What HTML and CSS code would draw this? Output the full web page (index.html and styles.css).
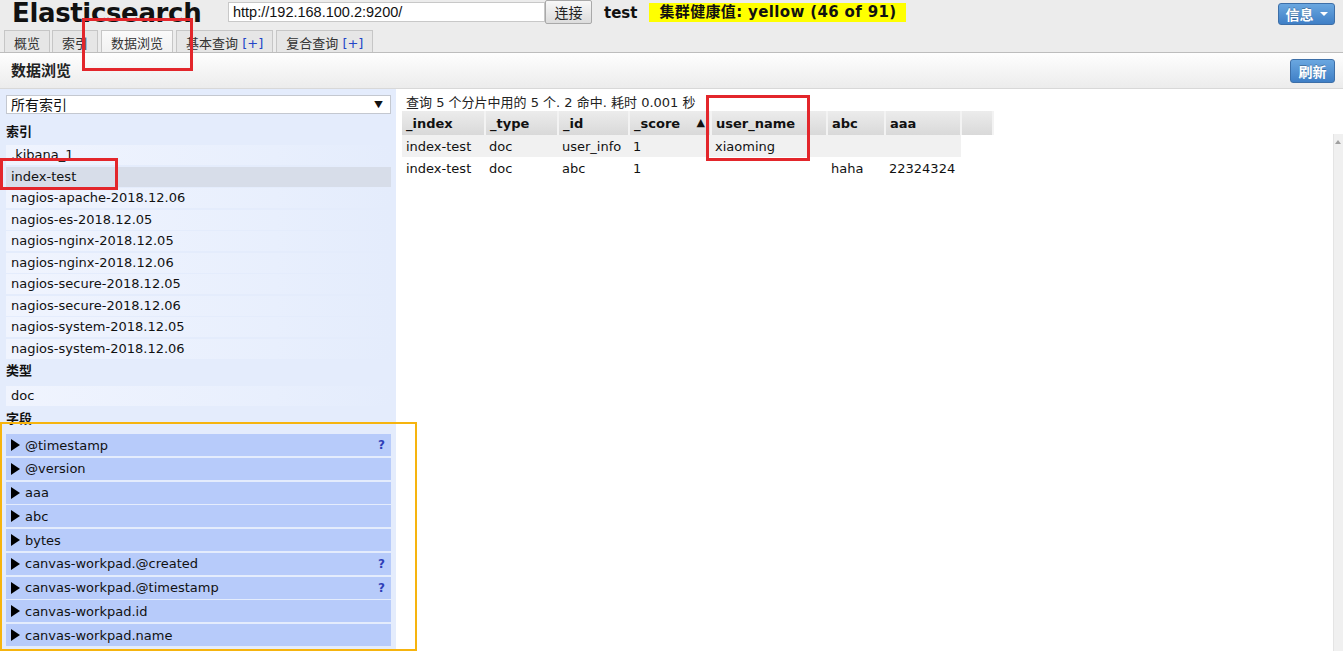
FILE: index.html
```html
<!DOCTYPE html>
<html lang="zh">
<head>
<meta charset="utf-8">
<title>Elasticsearch</title>
<link rel="stylesheet" href="styles.css">
</head>
<body>
<div class="header">
  <div class="top">
    <h1 class="logo">Elasticsearch</h1>
    <input class="url" type="text" value="http://192.168.100.2:9200/">
    <button class="connect">连接</button>
    <span class="cluster">test</span>
    <span class="health">集群健康值: yellow (46 of 91)</span>
    <button class="bluebtn info">信息 <span class="caret"></span></button>
  </div>
  <div class="tabs">
    <div class="tab">概览</div>
    <div class="tab">索引</div>
    <div class="tab active">数据浏览</div>
    <div class="tab">基本查询 <span class="plus">[+]</span></div>
    <div class="tab">复合查询 <span class="plus">[+]</span></div>
  </div>
</div>
<div class="toolbar">
  <h2 class="toolbar-title">数据浏览</h2>
  <button class="bluebtn refresh">刷新</button>
</div>
<div class="content">
  <div class="sidebar">
    <div class="select">所有索引<span class="sel-arrow">▼</span></div>
    <div class="sec-title first">索引</div>
    <div class="list first">
      <div class="item">.kibana_1</div>
      <div class="item selected">index-test</div>
      <div class="item">nagios-apache-2018.12.06</div>
      <div class="item">nagios-es-2018.12.05</div>
      <div class="item">nagios-nginx-2018.12.05</div>
      <div class="item">nagios-nginx-2018.12.06</div>
      <div class="item">nagios-secure-2018.12.05</div>
      <div class="item">nagios-secure-2018.12.06</div>
      <div class="item">nagios-system-2018.12.05</div>
      <div class="item">nagios-system-2018.12.06</div>
    </div>
    <div class="sec-title">类型</div>
    <div class="list">
      <div class="item">doc</div>
    </div>
    <div class="sec-title">字段</div>
    <div class="list">
      <div class="field"><span class="tri"></span><span class="fname">@timestamp</span><span class="q">?</span></div>
      <div class="field"><span class="tri"></span><span class="fname">@version</span></div>
      <div class="field"><span class="tri"></span><span class="fname">aaa</span></div>
      <div class="field"><span class="tri"></span><span class="fname">abc</span></div>
      <div class="field"><span class="tri"></span><span class="fname">bytes</span></div>
      <div class="field"><span class="tri"></span><span class="fname">canvas-workpad.@created</span><span class="q">?</span></div>
      <div class="field"><span class="tri"></span><span class="fname">canvas-workpad.@timestamp</span><span class="q">?</span></div>
      <div class="field"><span class="tri"></span><span class="fname">canvas-workpad.id</span></div>
      <div class="field"><span class="tri"></span><span class="fname">canvas-workpad.name</span></div>
    </div>
  </div>
  <div class="main">
    <div class="results">
      <div class="summary">查询 5 个分片中用的 5 个. 2 命中. 耗时 0.001 秒</div>
      <table class="grid">
        <colgroup>
          <col class="c1"><col class="c2"><col class="c3"><col class="c4"><col class="c5"><col class="c6"><col class="c7"><col class="c8">
        </colgroup>
        <thead>
          <tr>
            <th>_index</th><th>_type</th><th>_id</th><th>_score<span class="sort">▲</span></th><th>user_name</th><th>abc</th><th>aaa</th><th></th>
          </tr>
        </thead>
        <tbody>
          <tr class="odd"><td>index-test</td><td>doc</td><td>user_info</td><td>1</td><td>xiaoming</td><td></td><td></td></tr>
          <tr><td>index-test</td><td>doc</td><td>abc</td><td>1</td><td></td><td>haha</td><td>22324324</td></tr>
        </tbody>
      </table>
    </div>
    <div class="scrollbar"><span class="sb-up"></span></div>
  </div>
</div>
<div class="mark mark-tab"></div>
<div class="mark mark-index"></div>
<div class="mark mark-col"></div>
<div class="mark-fields"></div>
</body>
</html>
```

FILE: styles.css
```css
html, body {
  margin: 0;
  padding: 0;
}
body {
  font-family: "DejaVu Sans", "Noto Sans CJK SC", sans-serif;
  font-size: 13px;
  color: #111;
  background: #fff;
  width: 1343px;
  height: 652px;
  overflow: hidden;
}
.header {
  background: #ececec;
  border-bottom: 1px solid #bdbdbd;
}
.top {
  display: flex;
  align-items: flex-start;
  height: 30px;
}
.logo {
  margin: 0 0 0 12px;
  width: 216px;
  font-size: 26px;
  line-height: 26px;
  letter-spacing: -0.35px;
  font-weight: bold;
  color: #111;
}
.url {
  box-sizing: border-box;
  width: 317px;
  height: 20px;
  margin: 2px 0 0 0;
  border: 1px solid #c8c8c8;
  padding: 0 4px;
  font-family: "Liberation Sans", sans-serif;
  font-size: 14.5px;
  color: #111;
  background: #fff;
}
.connect {
  box-sizing: border-box;
  width: 47px;
  height: 24px;
  margin: 0;
  padding: 0;
  border: 1px solid #a9a9a9;
  border-radius: 2px;
  background: linear-gradient(#f8f8f8, #dcdcdc);
  font-family: "Noto Sans CJK SC", sans-serif;
  font-size: 14px;
  color: #222;
}
.cluster {
  margin: 3px 0 0 12px;
  font-size: 15px;
  line-height: 20px;
  font-weight: bold;
}
.health {
  margin: 3px 0 0 12px;
  padding: 0 10px;
  height: 19px;
  line-height: 19px;
  background: #ffff00;
  font-size: 15px;
  font-weight: bold;
  letter-spacing: 0.35px;
}
.bluebtn {
  box-sizing: border-box;
  border: 1px solid #3d6fa8;
  border-radius: 3px;
  background: linear-gradient(#6aa7e0, #3f7fc6);
  color: #fff;
  font-family: "Noto Sans CJK SC", sans-serif;
  font-weight: bold;
  font-size: 14px;
  padding: 0;
  text-shadow: 0 -1px 0 rgba(0,0,0,0.25);
}
.info {
  margin: 3px 8px 0 auto;
  width: 57px;
  height: 22px;
  display: flex;
  align-items: center;
  justify-content: center;
  gap: 6px;
}
.caret {
  width: 0;
  height: 0;
  border-left: 4px solid transparent;
  border-right: 4px solid transparent;
  border-top: 4px solid #fff;
}
.tabs {
  display: flex;
  align-items: flex-end;
  height: 22px;
  padding-left: 4px;
  gap: 2px;
}
.tab {
  box-sizing: border-box;
  height: 22px;
  line-height: 16px;
  padding: 5px 9px 0 9px;
  border: 1px solid #c6c6c6;
  border-bottom: none;
  background: #e6e6e6;
  color: #333;
  margin-right: 1px;
}
.tab:first-child { margin-right: 0; }
.tab.active {
  background: linear-gradient(#fafafa, #f1f1f1);
}
.plus {
  color: #2445c8;
}
.toolbar {
  box-sizing: border-box;
  height: 36px;
  display: flex;
  align-items: center;
  justify-content: space-between;
  padding: 0 8px 0 11px;
  background: linear-gradient(#fefefe, #ececec);
  border-bottom: 1px solid #d8d8d8;
}
.toolbar-title {
  margin: 0 0 3px 0;
  font-size: 15px;
  font-weight: bold;
  color: #222;
}
.refresh {
  width: 45px;
  height: 24px;
}
.content {
  display: flex;
  height: 562px;
}
.sidebar {
  width: 396px;
  box-sizing: border-box;
  padding: 6px 6px 0 6px;
  background: #e4ecfc;
}
.select {
  box-sizing: border-box;
  height: 19px;
  width: 385px;
  background: #fff;
  border: 1px solid #c4c8d0;
  padding: 0 4px;
  line-height: 17px;
  font-family: "Noto Sans CJK SC", sans-serif;
  font-size: 14px;
  position: relative;
  display: flex;
  justify-content: space-between;
}
.sel-arrow {
  font-size: 9px;
  color: #111;
  margin-right: 3px;
}
.sec-title {
  height: 22px;
  line-height: 22px;
  font-weight: bold;
  color: #111;
}
.sec-title.first {
  margin-top: 7px;
}
.list {
  margin-top: 4px;
}
.list.first {
  margin-top: 2px;
}
.item {
  box-sizing: border-box;
  height: 20px;
  line-height: 20px;
  padding-left: 5px;
  margin-bottom: 1.56px;
  width: 385px;
  background: linear-gradient(to right, #f0f4fe, #e8effd 70%, #e4ecfc);
}
.item.selected {
  background: #d7dde9;
}
.field {
  box-sizing: border-box;
  display: flex;
  align-items: center;
  height: 22px;
  width: 385px;
  margin-bottom: 1.75px;
  padding: 0 6px 0 5px;
  background: #b7cbfa;
}
.tri {
  width: 0;
  height: 0;
  border-top: 6px solid transparent;
  border-bottom: 6px solid transparent;
  border-left: 9px solid #000;
  margin-right: 5px;
}
.fname {
  flex: 1;
}
.q {
  color: #2f3fb8;
  font-weight: bold;
  font-size: 12px;
}
.main {
  flex: 1;
  display: flex;
}
.results {
  flex: 1;
  padding-left: 6px;
}
.summary {
  margin: 6px 0 0 4px;
  line-height: 16px;
  color: #222;
}
.grid {
  margin-top: 0;
  border-collapse: collapse;
  table-layout: fixed;
  width: 591px;
}
.c1 { width: 83px; }
.c2 { width: 73px; }
.c3 { width: 71px; }
.c4 { width: 82px; }
.c5 { width: 116px; }
.c6 { width: 58px; }
.c7 { width: 76px; }
.c8 { width: 32px; }
.grid th {
  height: 23px;
  padding: 1px 4px 0 4px;
  text-align: left;
  font-weight: bold;
  background: linear-gradient(#ececec, #d9d9d9);
  border-right: 2px solid #f3f3f3;
  white-space: nowrap;
  overflow: hidden;
}
.sort {
  float: right;
  font-size: 11px;
  margin-right: 1px;
}
.grid td {
  height: 22px;
  padding: 0 4px;
  white-space: nowrap;
  overflow: hidden;
}
.grid tr.odd td {
  background: #f1f1f1;
}
.scrollbar {
  width: 9px;
  margin-top: 45px;
  background: #f0f0f0;
  border-left: 1px solid #e4e4e4;
  position: relative;
}
.sb-up {
  position: absolute;
  top: 6px;
  left: 1px;
  width: 0;
  height: 0;
  border-left: 3.5px solid transparent;
  border-right: 3.5px solid transparent;
  border-bottom: 4px solid #a0a0a0;
}
.mark {
  position: absolute;
  box-sizing: border-box;
  border: 3px solid #e3262b;
}
.mark-tab {
  left: 82px;
  top: 18px;
  width: 111px;
  height: 53px;
}
.mark-index {
  left: 0;
  top: 158px;
  width: 118px;
  height: 32px;
}
.mark-col {
  left: 706px;
  top: 95px;
  width: 104px;
  height: 66px;
}
.mark-fields {
  position: absolute;
  box-sizing: border-box;
  left: 0;
  top: 422px;
  width: 417px;
  height: 229px;
  border: 2px solid #f6b40e;
}
```
